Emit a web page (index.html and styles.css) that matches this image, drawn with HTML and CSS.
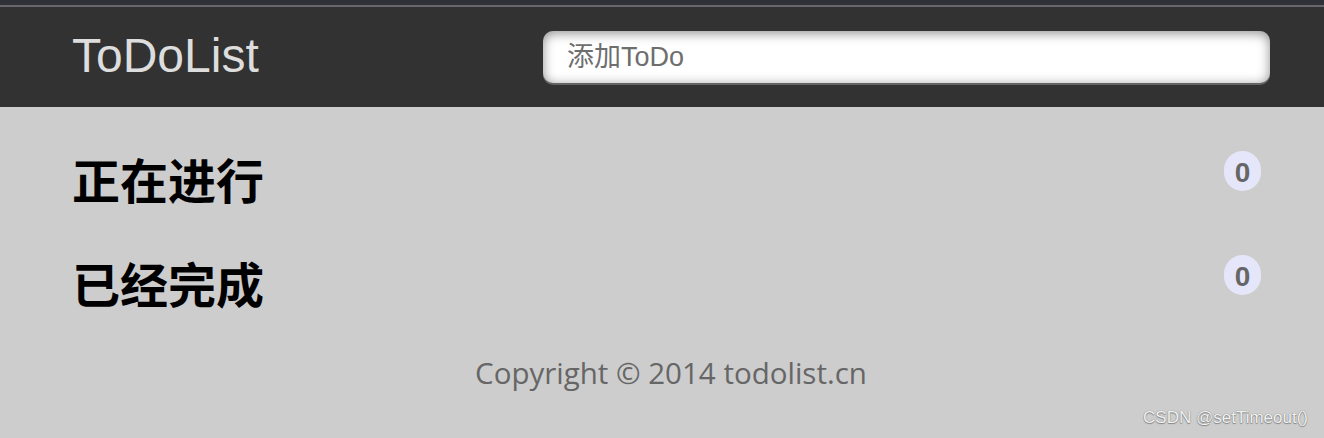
FILE: index.html
```html
<!DOCTYPE html>
<html lang="zh-CN">
<head>
<meta charset="utf-8">
<title>ToDoList</title>
<link rel="stylesheet" href="styles.css">
</head>
<body>
<div class="topbar"></div>
<header class="header">
  <div class="header-inner">
    <label class="logo" for="title">ToDoList</label>
    <input class="add-input" id="title" type="text" placeholder="添加ToDo">
  </div>
</header>
<main class="main">
  <section class="group">
    <h2 class="group-title">正在进行</h2>
    <span class="count">0</span>
  </section>
  <section class="group">
    <h2 class="group-title">已经完成</h2>
    <span class="count">0</span>
  </section>
</main>
<footer class="footer">Copyright © 2014 todolist.cn</footer>
<div class="watermark">CSDN @setTimeout()</div>
</body>
</html>
```

FILE: styles.css
```css
html, body {
  margin: 0;
  padding: 0;
}
body {
  background: #cdcdcd;
  font-family: "Liberation Sans", "Noto Sans CJK SC", sans-serif;
  height: 438px;
  overflow: hidden;
  position: relative;
}
.topbar {
  height: 5px;
  background: #303136;
  border-bottom: 2px solid #67676d;
}
.header {
  height: 100px;
  background: #323232;
}
.header-inner {
  height: 100%;
  display: flex;
  align-items: center;
  justify-content: space-between;
  padding: 0 54px 0 72px;
}
.logo {
  font-family: "Liberation Sans", sans-serif;
  font-size: 48px;
  color: #dddddd;
  line-height: 1;
  position: relative;
  top: -1px;
}
.add-input {
  box-sizing: border-box;
  width: 727px;
  height: 52px;
  border: none;
  border-radius: 10px;
  background: #ffffff;
  padding: 0 24px;
  font-family: "Liberation Sans", "Noto Sans CJK SC", sans-serif;
  font-size: 27px;
  color: #333;
  outline: none;
  box-shadow: 0 2px 0 rgba(255, 255, 255, 0.24), inset 0 2px 12px rgba(0, 0, 0, 0.45);
}
.add-input::placeholder {
  color: #6e6e6e;
}
.main {
  padding: 44px 63px 0 72px;
  display: flex;
  flex-direction: column;
  gap: 44px;
}
.group {
  display: flex;
  justify-content: space-between;
  align-items: flex-start;
}
.group-title {
  margin: -3px 0 3px;
  font-family: "Noto Sans CJK SC", sans-serif;
  font-size: 48px;
  font-weight: 700;
  line-height: 60px;
  color: #000;
}
.count {
  display: inline-block;
  height: 40px;
  min-width: 17px;
  padding: 0 10px;
  border-radius: 20px;
  background: #e6e6fa;
  color: #666;
  font-family: "Liberation Sans", sans-serif;
  font-weight: 700;
  font-size: 28px;
  line-height: 43px;
  text-align: center;
}
.footer {
  margin-top: 38px;
  padding-left: 18px;
  text-align: center;
  font-family: "Open Sans", sans-serif;
  font-size: 29.5px;
  line-height: 40px;
  color: #666;
}
.watermark {
  position: absolute;
  right: 16px;
  bottom: 10px;
  font-family: "Liberation Sans", sans-serif;
  font-size: 17px;
  color: #f2f2f2;
  text-shadow: 0 0 1px #666, 0 1px 1px #888;
}
```
